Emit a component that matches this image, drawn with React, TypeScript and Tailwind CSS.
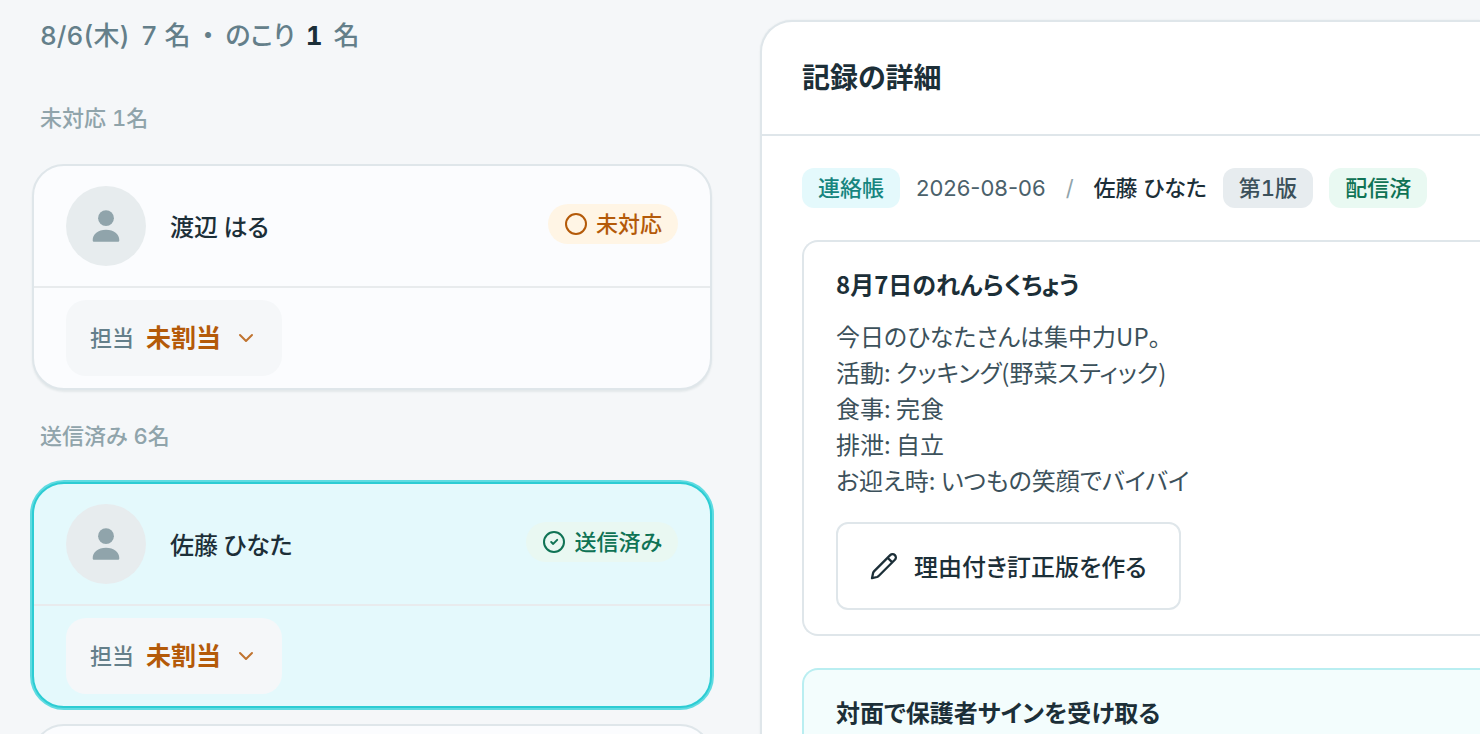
import type { ReactNode } from "react";
import { ChevronDown, Circle } from "lucide-react";

interface Child {
  id: string;
  name: string;
  sent: boolean;
  selected?: boolean;
}

const PENDING: Child[] = [{ id: "haru", name: "渡辺 はる", sent: false }];
const SENT: Child[] = [{ id: "hinata", name: "佐藤 ひなた", sent: true, selected: true }];

const NOTE = [
  "今日のひなたさんは集中力UP。",
  "活動: クッキング(野菜スティック)",
  "食事: 完食",
  "排泄: 自立",
  "お迎え時: いつもの笑顔でバイバイ",
];

function PersonIcon() {
  return (
    <svg width="40" height="40" viewBox="0 0 40 40" fill="#90a4ab" aria-hidden>
      <circle cx="20" cy="12.2" r="7.9" />
      <path d="M6.7 34.2C6.7 28 12 23.7 20 23.7S33.3 28 33.3 34.2c0 1-.6 1.6-1.6 1.6H8.3c-1 0-1.6-.6-1.6-1.6Z" />
    </svg>
  );
}

function CheckCircleIcon() {
  return (
    <svg width="24" height="24" viewBox="0 0 24 24" fill="none" stroke="currentColor" strokeWidth="2" strokeLinecap="round" strokeLinejoin="round" aria-hidden>
      <circle cx="12" cy="12" r="10" />
      <path d="m9.2 12 2 1.9 4-4" />
    </svg>
  );
}

function PencilIcon() {
  return (
    <svg width="28" height="28" viewBox="0 0 28 28" fill="none" stroke="currentColor" strokeWidth="2.3" strokeLinecap="round" strokeLinejoin="round" aria-hidden>
      <path d="M20.2 3.1a3.3 3.3 0 0 1 4.7 4.7L8.9 23.8Q8 24.7 7 25L2 26.2 3.1 21Q3.3 20 4.2 19.1ZM17.6 5.7l4.7 4.7" />
    </svg>
  );
}

function StatusBadge({ sent }: { sent: boolean }) {
  return (
    <span
      className={`mb-1 flex h-10 shrink-0 items-center gap-2 rounded-full px-4 text-[22px] font-medium ${
        sent ? "bg-[#e9f8f2] text-[#0f7355]" : "bg-[#fff5e5] text-[#b45a09]"
      }`}
    >
      {sent ? <CheckCircleIcon /> : <Circle size={24} aria-hidden />}
      {sent ? "送信済み" : "未対応"}
    </span>
  );
}

function ChildCard({ child }: { child: Child }) {
  return (
    <article
      className={`rounded-[32px] border-2 ${
        child.selected
          ? "border-[#2cccd3] bg-[#e4f9fc] ring-2 ring-[#5fdbe1]"
          : "border-[#dfe6ea] bg-[#fbfcfe] shadow-[0_2px_2px_rgba(30,60,70,0.08)]"
      }`}
    >
      <div className="flex items-center gap-6 px-8 py-5">
        <span className="flex size-20 shrink-0 items-center justify-center rounded-full bg-[#e7ecee]">
          <PersonIcon />
        </span>
        <h3 className="flex-1 font-['Noto_Sans_CJK_JP',sans-serif] text-2xl font-medium text-[#1c2f38]">{child.name}</h3>
        <StatusBadge sent={child.sent} />
      </div>
      <div className="flex border-t-2 border-[#e8ebed] px-8 py-3">
        <div className="flex h-[76px] items-center gap-3 rounded-[20px] bg-[#f5f7f9] px-6">
          <label htmlFor={`staff-${child.id}`} className="text-[22px] font-medium text-[#647f8a]">
            担当
          </label>
          <select
            id={`staff-${child.id}`}
            className="cursor-pointer appearance-none bg-transparent text-[25px] leading-10 font-bold text-[#b45a09] outline-none"
          >
            <option>未割当</option>
          </select>
          <ChevronDown size={24} className="pointer-events-none text-[#c07430]" aria-hidden />
        </div>
      </div>
    </article>
  );
}

function SectionLabel({ children }: { children: ReactNode }) {
  return <h2 className="px-2 py-7 text-[22px] leading-9 font-medium text-[#90a4ab]">{children}</h2>;
}

function Tag({ className, children }: { className: string; children: ReactNode }) {
  return <span className={`flex h-10 items-center rounded-xl px-4 text-[22px] font-medium ${className}`}>{children}</span>;
}

export default function App() {
  return (
    <div className="grid h-screen grid-cols-[19fr_18fr] overflow-hidden bg-[#f5f7f9] font-[Inter,'Noto_Sans_CJK_JP',sans-serif] text-[#1c2f38] tabular-nums [font-feature-settings:'palt']">
      <main className="min-w-0 pr-12 pl-8">
        <p className="flex gap-[11px] px-2 py-4 text-[26px] leading-10 font-medium text-[#647f8a]">
          <span>8/6(木)</span>
          <span>7 名</span>
          <span>・</span>
          <span>のこり</span>
          <strong className="font-bold text-[#1c2f38]">1</strong>
          <span>名</span>
        </p>
        <section>
          <SectionLabel>未対応 1名</SectionLabel>
          {PENDING.map((c) => (
            <ChildCard key={c.id} child={c} />
          ))}
        </section>
        <section>
          <SectionLabel>送信済み 6名</SectionLabel>
          <div className="flex flex-col gap-4">
            {SENT.map((c) => (
              <ChildCard key={c.id} child={c} />
            ))}
            <div className="h-32 rounded-[32px] border-2 border-[#dfe6ea] bg-[#fbfcfe]" />
          </div>
        </section>
      </main>

      <aside className="mt-5 min-w-0 rounded-tl-[32px] border-t-2 border-l-2 border-[#dfe6ea] bg-white shadow-[0_0_2px_rgba(30,60,70,0.08)]">
        <header className="border-b-2 border-[#dfe6ea] px-10 py-9">
          <h2 className="text-[28px] leading-10 font-bold">記録の詳細</h2>
        </header>
        <div className="flex flex-col gap-8 pt-8 pl-10">
          <div className="flex items-center gap-4 text-[22px] whitespace-nowrap">
            <Tag className="bg-[#e4f9fc] text-[#16857f]">連絡帳</Tag>
            <time dateTime="2026-08-06" className="text-[#4b616b] normal-nums">
              2026-08-06
            </time>
            <span className="px-1 text-[#90a4ab]">/</span>
            <span className="font-medium">佐藤 ひなた</span>
            <Tag className="bg-[#e7ecef] text-[#3c515b]">第1版</Tag>
            <Tag className="bg-[#e9f9f2] text-[#0f7355]">配信済</Tag>
          </div>

          <section className="rounded-l-2xl border-2 border-r-0 border-[#dfe6ea] px-8 py-6 font-['Noto_Sans_CJK_JP',sans-serif]">
            <h3 className="text-2xl leading-9 font-bold">8月7日のれんらくちょう</h3>
            <div className="mt-4 text-2xl leading-9 text-[#3c515b]">
              {NOTE.map((line) => (
                <p key={line}>{line}</p>
              ))}
            </div>
            <button
              type="button"
              className="mt-6 flex h-[88px] cursor-pointer items-center gap-4 rounded-xl border-2 border-[#dfe6ea] bg-white px-8 text-2xl font-medium"
            >
              <PencilIcon />
              理由付き訂正版を作る
            </button>
          </section>

          <section className="min-h-40 rounded-l-2xl border-2 border-r-0 border-[#b9eef1] bg-[#f3fdfd] px-8 py-6 font-['Noto_Sans_CJK_JP',sans-serif]">
            <h3 className="text-2xl leading-9 font-bold">対面で保護者サインを受け取る</h3>
          </section>
        </div>
      </aside>
    </div>
  );
}
